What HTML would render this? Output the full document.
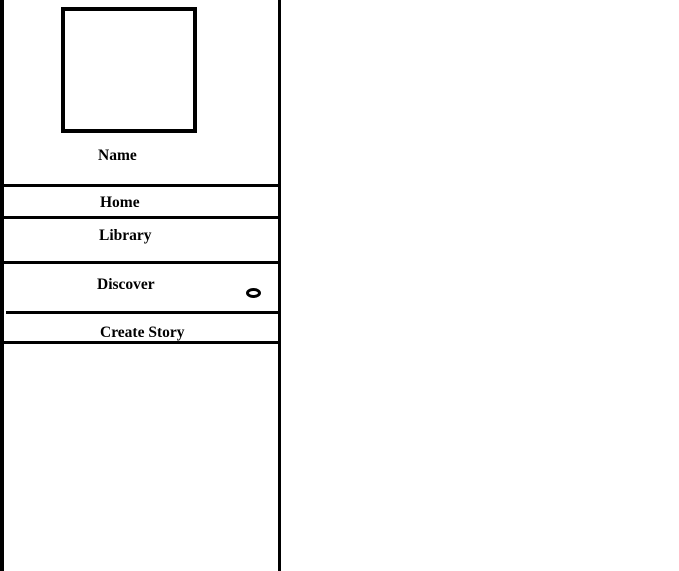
<!DOCTYPE html>
<html><head><style>
body{margin:0;width:679px;height:571px;background:#fff;position:relative;overflow:hidden;font-family:"Liberation Serif",serif;font-weight:bold;font-size:15.5px;color:#000}
.b{position:absolute;background:#000}
.t{position:absolute;line-height:16px}
</style></head><body>
<div class="b" style="left:0;top:0;width:4px;height:571px"></div>
<div class="b" style="left:278px;top:0;width:3px;height:571px"></div>
<div style="position:absolute;left:61px;top:7px;width:128px;height:118px;border:4.5px solid #000"></div>
<div class="t" style="left:98px;top:148px">Name</div>
<div class="b" style="left:4px;top:184px;width:274px;height:3px"></div>
<div class="t" style="left:100px;top:195px">Home</div>
<div class="b" style="left:4px;top:216px;width:274px;height:3px"></div>
<div class="t" style="left:99px;top:228px">Library</div>
<div class="b" style="left:4px;top:261px;width:274px;height:3px"></div>
<div class="t" style="left:97px;top:277px">Discover</div>
<div style="position:absolute;left:246px;top:288px;width:9px;height:4px;border:3px solid #000;border-radius:50%"></div>
<div class="b" style="left:6px;top:311px;width:272px;height:3px"></div>
<div class="t" style="left:100px;top:325px">Create Story</div>
<div class="b" style="left:4px;top:341px;width:274px;height:3px"></div>
</body></html>
